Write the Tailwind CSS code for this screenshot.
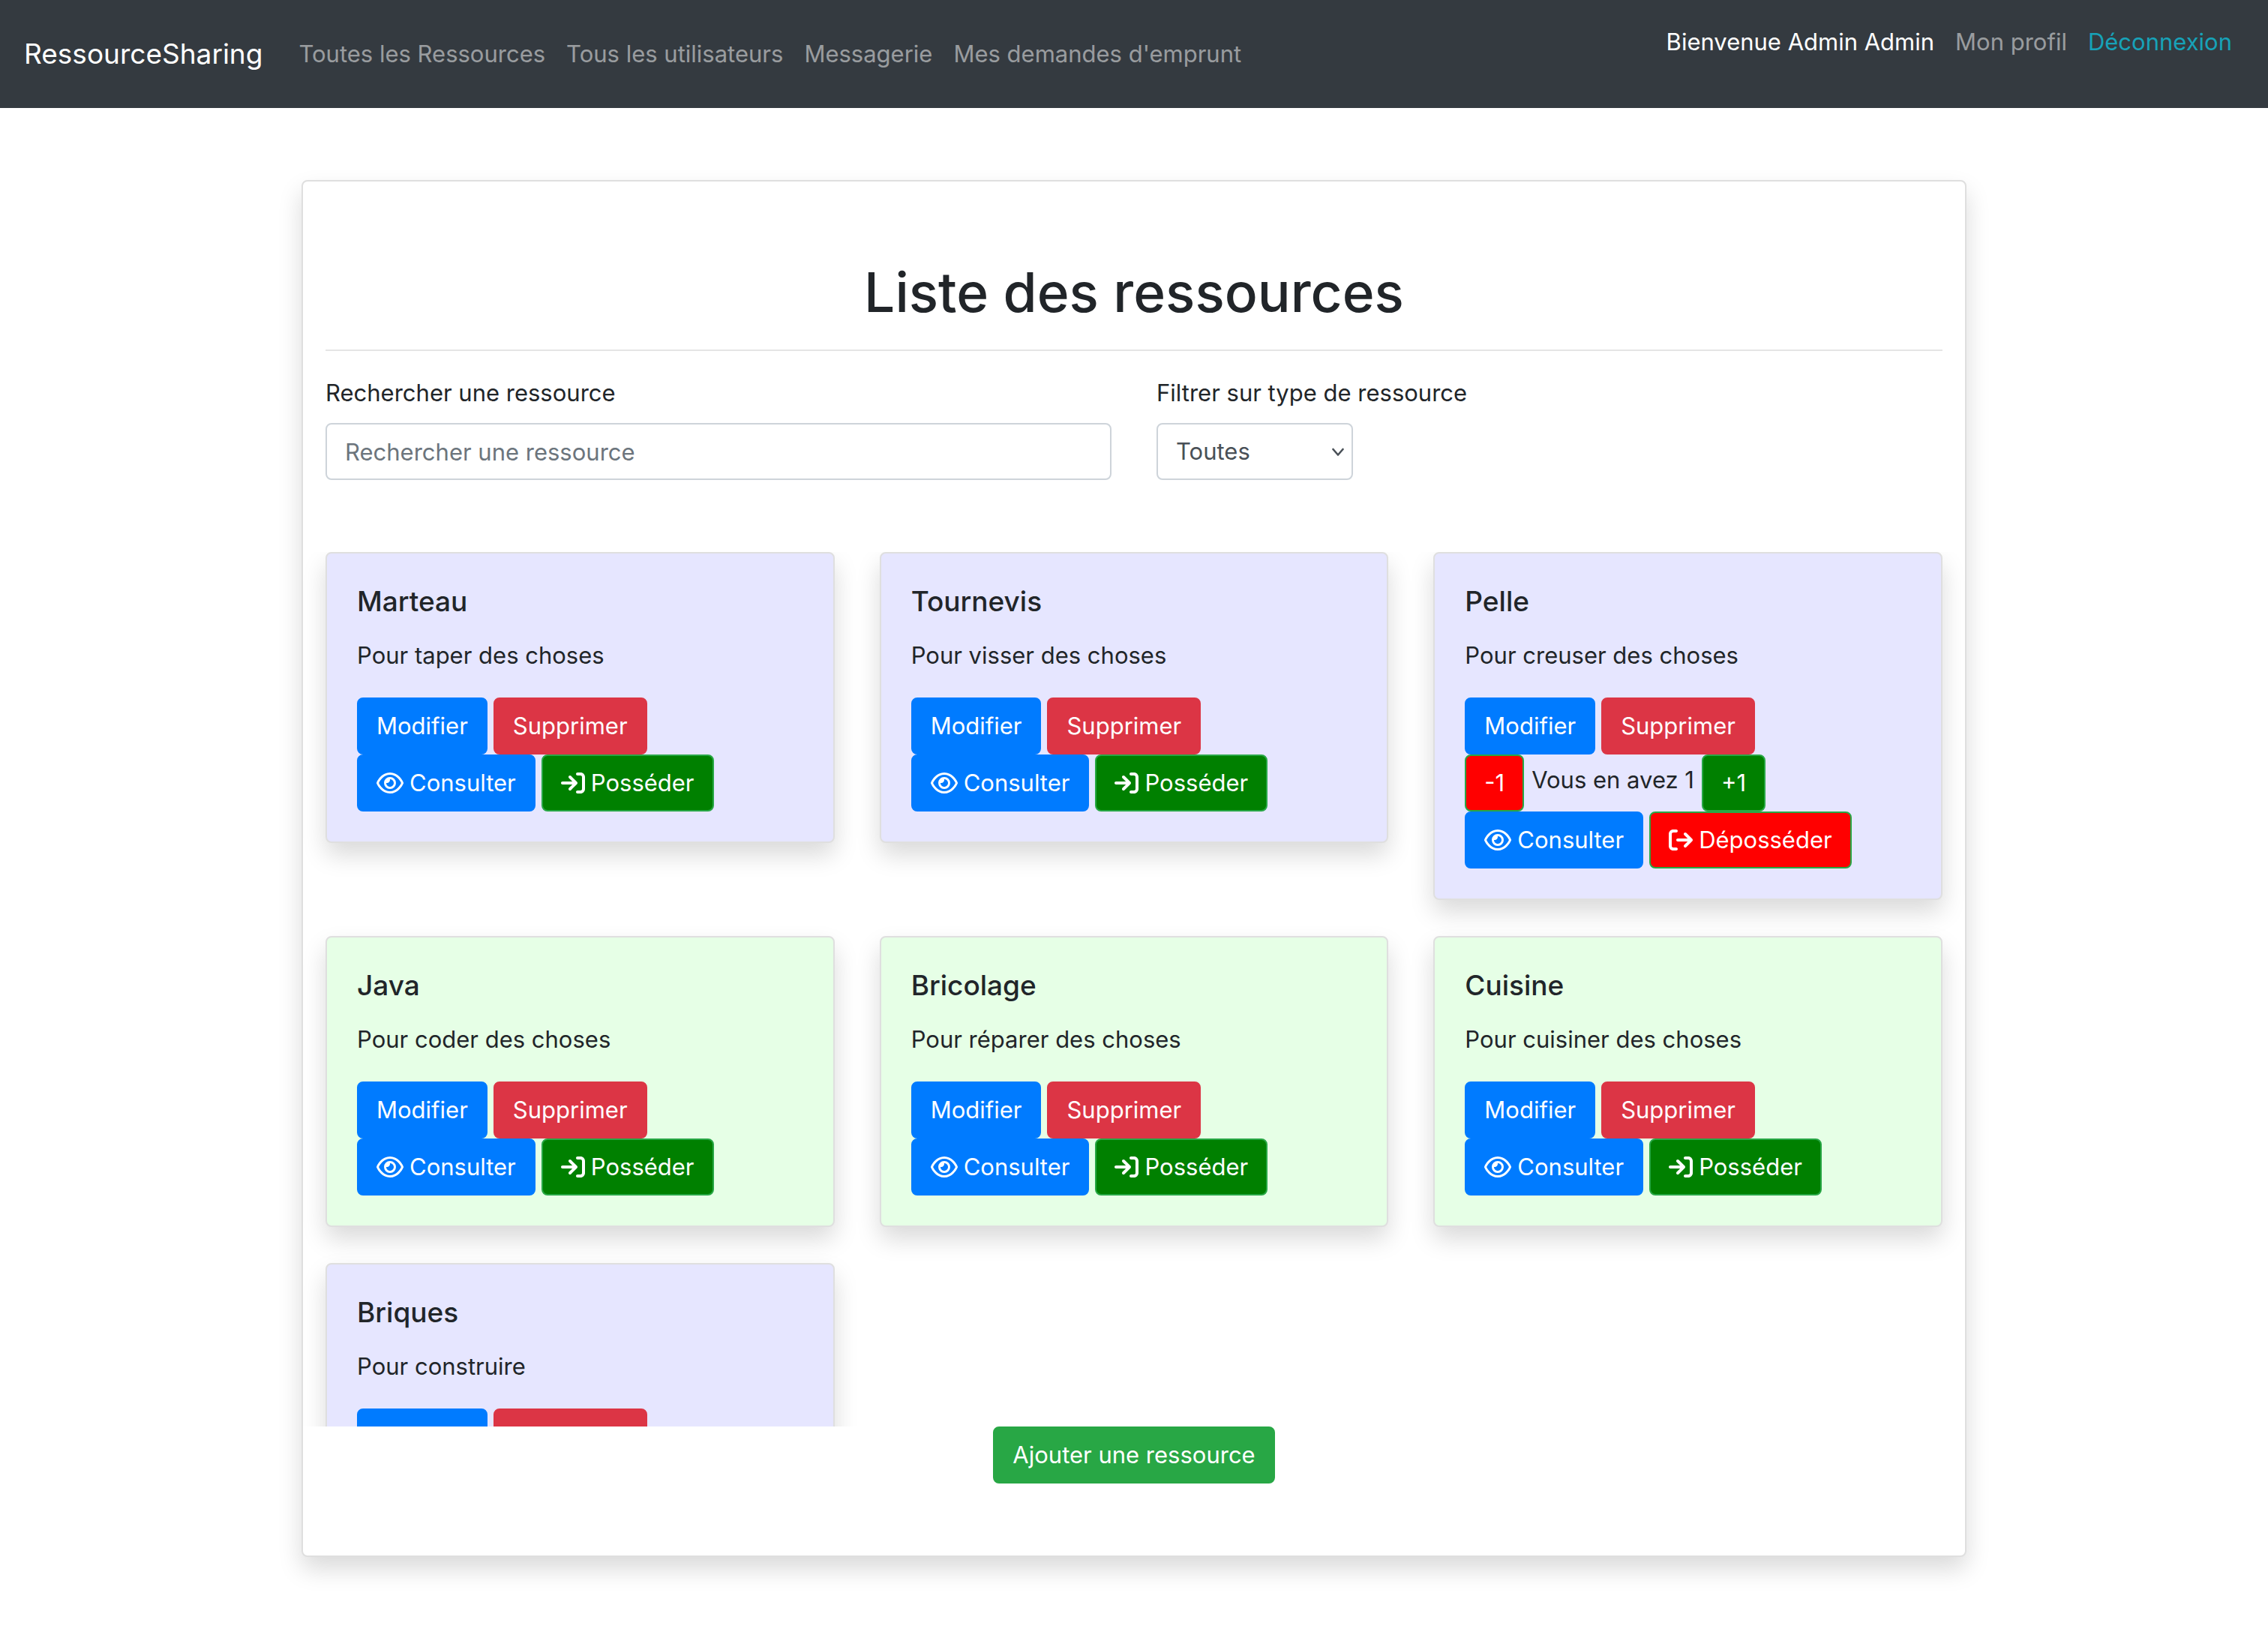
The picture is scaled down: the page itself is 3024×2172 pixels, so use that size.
<!DOCTYPE html>
<html lang="fr">
<head>
<meta charset="utf-8">
<meta name="viewport" content="width=device-width, initial-scale=1">
<title>RessourceSharing</title>
<script src="https://cdn.jsdelivr.net/npm/@tailwindcss/browser@4"></script>
</head>
<body class="min-h-screen bg-white font-['Inter',sans-serif] text-[31px] leading-[48px] text-[#212529]">

<svg class="hidden" aria-hidden="true">
  <symbol id="eye" viewBox="0 0 576 512"><path d="M288 80c-65.2 0-118.8 29.6-159.9 67.7C89.6 183.5 63 226 49.4 256c13.6 30 40.2 72.5 78.6 108.3C169.2 402.4 222.8 432 288 432s118.8-29.6 159.9-67.7C486.4 328.5 513 286 526.6 256c-13.6-30-40.2-72.5-78.6-108.3C406.8 109.6 353.2 80 288 80zM95.4 112.6C142.5 68.8 207.2 32 288 32s145.5 36.8 192.6 80.6c46.8 43.5 78.1 95.4 93 131.1c3.3 7.9 3.3 16.7 0 24.6c-14.9 35.7-46.2 87.7-93 131.1C433.5 443.2 368.8 480 288 480s-145.5-36.8-192.6-80.6C48.6 356 17.3 304 2.5 268.3c-3.3-7.9-3.3-16.7 0-24.6C17.3 208 48.6 156 95.4 112.6zM288 336c44.2 0 80-35.8 80-80s-35.8-80-80-80c-.7 0-1.3 0-2 0c1.3 5.1 2 10.5 2 16c0 35.3-28.7 64-64 64c-5.5 0-10.9-.7-16-2c0 .7 0 1.3 0 2c0 44.2 35.8 80 80 80zm0-208a128 128 0 1 1 0 256 128 128 0 1 1 0-256z"/></symbol>
  <symbol id="enter" viewBox="0 0 512 512"><path d="M352 96l64 0c17.7 0 32 14.3 32 32l0 256c0 17.7-14.3 32-32 32l-64 0c-17.7 0-32 14.3-32 32s14.3 32 32 32l64 0c53 0 96-43 96-96l0-256c0-53-43-96-96-96l-64 0c-17.7 0-32 14.3-32 32s14.3 32 32 32zm-9.4 182.6c12.5-12.5 12.5-32.8 0-45.3l-128-128c-12.5-12.5-32.8-12.5-45.3 0s-12.5 32.8 0 45.3L242.7 224 32 224c-17.7 0-32 14.3-32 32s14.3 32 32 32l210.7 0-73.4 73.4c-12.5 12.5-12.5 32.8 0 45.3s32.8 12.5 45.3 0l128-128z"/></symbol>
  <symbol id="leave" viewBox="0 0 512 512"><path d="M502.6 278.6c12.5-12.5 12.5-32.8 0-45.3l-128-128c-12.5-12.5-32.8-12.5-45.3 0s-12.5 32.8 0 45.3L402.7 224 192 224c-17.7 0-32 14.3-32 32s14.3 32 32 32l210.7 0-73.4 73.4c-12.5 12.5-12.5 32.8 0 45.3s32.8 12.5 45.3 0l128-128zM160 96c17.7 0 32-14.3 32-32s-14.3-32-32-32L96 32C43 32 0 75 0 128L0 384c0 53 43 96 96 96l64 0c17.7 0 32-14.3 32-32s-14.3-32-32-32l-64 0c-17.7 0-32-14.3-32-32l0-256c0-17.7 14.3-32 32-32l64 0z"/></symbol>
</svg>

<nav class="flex items-center bg-[#343a40] px-8 py-4 text-white/50">
  <a href="#" class="mr-12 text-[37px] text-white">RessourceSharing</a>
  <ul class="flex gap-7">
    <li><a href="#">Toutes les Ressources</a></li>
    <li><a href="#">Tous les utilisateurs</a></li>
    <li><a href="#">Messagerie</a></li>
    <li><a href="#">Mes demandes d'emprunt</a></li>
  </ul>
  <ul class="mb-8 ml-auto flex gap-7 px-4 py-4">
    <li class="text-white">Bienvenue Admin Admin</li>
    <li><a href="#">Mon profil</a></li>
    <li><a href="#" class="text-[#17a2b8]">Déconnexion</a></li>
  </ul>
</nav>

<main class="mx-auto my-24 max-w-[2220px] rounded-lg border-2 border-[#dfdfdf] bg-white px-[30px] pt-[100px] pb-24 shadow-[0_16px_32px_rgba(0,0,0,0.15)]">
  <h1 class="text-center text-[73px] leading-[96px] font-medium">Liste des ressources</h1>
  <hr class="mt-7 border-t-2 border-black/10">

  <form class="mt-8 grid grid-cols-2 gap-[60px]">
    <div class="flex flex-col gap-4">
      <label for="recherche">Rechercher une ressource</label>
      <input id="recherche" type="text" placeholder="Rechercher une ressource" class="h-[76px] w-full rounded-lg border-2 border-[#ced4da] bg-white px-6 text-[#495057] placeholder:text-[#6c757d]">
    </div>
    <div class="flex flex-col gap-4">
      <label for="type">Filtrer sur type de ressource</label>
      <div class="relative w-[262px]">
        <select id="type" class="h-[76px] w-full appearance-none rounded-lg border-2 border-[#ced4da] bg-white px-6 text-[#495057]">
          <option>Toutes</option>
        </select>
        <svg class="pointer-events-none absolute top-[33px] right-3 h-3 w-4 fill-none stroke-[#495057]" viewBox="0 0 16 12" stroke-width="2.6" stroke-linecap="round" stroke-linejoin="round"><path d="M1.500 2 8 9.500 14.500 2"/></svg>
      </div>
    </div>
  </form>

  <section class="-mx-[30px] mt-24 grid max-h-[1166px] grid-cols-3 items-start gap-x-[60px] gap-y-12 overflow-y-auto px-[30px] [scrollbar-width:none]">

    <article class="rounded-lg border-2 border-[#dfdfdf] bg-[#e6e6ff] p-10 shadow-[0_16px_32px_rgba(0,0,0,0.15)]">
      <h2 class="mb-6 text-[37px] font-medium">Marteau</h2>
      <p class="mb-8">Pour taper des choses</p>
      <div class="flex gap-2">
        <button class="h-[76px] rounded-lg border-2 border-[#007bff] bg-[#007bff] px-6 text-white">Modifier</button>
        <button class="h-[76px] rounded-lg border-2 border-[#dc3545] bg-[#dc3545] px-6 text-white">Supprimer</button>
      </div>
      <div class="flex gap-2">
        <button class="flex h-[76px] items-center gap-2 rounded-lg border-2 border-[#007bff] bg-[#007bff] px-6 text-white"><svg class="h-8 w-9 fill-current"><use href="#eye"/></svg>Consulter</button>
        <button class="flex h-[76px] items-center gap-2 rounded-lg border-2 border-[#28a745] bg-[#008000] px-6 text-white"><svg class="size-8 fill-current"><use href="#enter"/></svg>Posséder</button>
      </div>
    </article>

    <article class="rounded-lg border-2 border-[#dfdfdf] bg-[#e6e6ff] p-10 shadow-[0_16px_32px_rgba(0,0,0,0.15)]">
      <h2 class="mb-6 text-[37px] font-medium">Tournevis</h2>
      <p class="mb-8">Pour visser des choses</p>
      <div class="flex gap-2">
        <button class="h-[76px] rounded-lg border-2 border-[#007bff] bg-[#007bff] px-6 text-white">Modifier</button>
        <button class="h-[76px] rounded-lg border-2 border-[#dc3545] bg-[#dc3545] px-6 text-white">Supprimer</button>
      </div>
      <div class="flex gap-2">
        <button class="flex h-[76px] items-center gap-2 rounded-lg border-2 border-[#007bff] bg-[#007bff] px-6 text-white"><svg class="h-8 w-9 fill-current"><use href="#eye"/></svg>Consulter</button>
        <button class="flex h-[76px] items-center gap-2 rounded-lg border-2 border-[#28a745] bg-[#008000] px-6 text-white"><svg class="size-8 fill-current"><use href="#enter"/></svg>Posséder</button>
      </div>
    </article>

    <article class="rounded-lg border-2 border-[#dfdfdf] bg-[#e6e6ff] p-10 shadow-[0_16px_32px_rgba(0,0,0,0.15)]">
      <h2 class="mb-6 text-[37px] font-medium">Pelle</h2>
      <p class="mb-8">Pour creuser des choses</p>
      <div class="flex gap-2">
        <button class="h-[76px] rounded-lg border-2 border-[#007bff] bg-[#007bff] px-6 text-white">Modifier</button>
        <button class="h-[76px] rounded-lg border-2 border-[#dc3545] bg-[#dc3545] px-6 text-white">Supprimer</button>
      </div>
      <div class="flex items-center gap-2.5">
        <button class="h-[76px] rounded-lg border-2 border-[#28a745] bg-[#ff0000] px-6 text-white">-1</button>
        <span class="pb-2">Vous en avez 1</span>
        <button class="h-[76px] rounded-lg border-2 border-[#28a745] bg-[#008000] px-6 text-white">+1</button>
      </div>
      <div class="flex gap-2">
        <button class="flex h-[76px] items-center gap-2 rounded-lg border-2 border-[#007bff] bg-[#007bff] px-6 text-white"><svg class="h-8 w-9 fill-current"><use href="#eye"/></svg>Consulter</button>
        <button class="flex h-[76px] items-center gap-2 rounded-lg border-2 border-[#28a745] bg-[#ff0000] px-6 text-white"><svg class="size-8 fill-current"><use href="#leave"/></svg>Déposséder</button>
      </div>
    </article>

    <article class="rounded-lg border-2 border-[#dfdfdf] bg-[#e6ffe6] p-10 shadow-[0_16px_32px_rgba(0,0,0,0.15)]">
      <h2 class="mb-6 text-[37px] font-medium">Java</h2>
      <p class="mb-8">Pour coder des choses</p>
      <div class="flex gap-2">
        <button class="h-[76px] rounded-lg border-2 border-[#007bff] bg-[#007bff] px-6 text-white">Modifier</button>
        <button class="h-[76px] rounded-lg border-2 border-[#dc3545] bg-[#dc3545] px-6 text-white">Supprimer</button>
      </div>
      <div class="flex gap-2">
        <button class="flex h-[76px] items-center gap-2 rounded-lg border-2 border-[#007bff] bg-[#007bff] px-6 text-white"><svg class="h-8 w-9 fill-current"><use href="#eye"/></svg>Consulter</button>
        <button class="flex h-[76px] items-center gap-2 rounded-lg border-2 border-[#28a745] bg-[#008000] px-6 text-white"><svg class="size-8 fill-current"><use href="#enter"/></svg>Posséder</button>
      </div>
    </article>

    <article class="rounded-lg border-2 border-[#dfdfdf] bg-[#e6ffe6] p-10 shadow-[0_16px_32px_rgba(0,0,0,0.15)]">
      <h2 class="mb-6 text-[37px] font-medium">Bricolage</h2>
      <p class="mb-8">Pour réparer des choses</p>
      <div class="flex gap-2">
        <button class="h-[76px] rounded-lg border-2 border-[#007bff] bg-[#007bff] px-6 text-white">Modifier</button>
        <button class="h-[76px] rounded-lg border-2 border-[#dc3545] bg-[#dc3545] px-6 text-white">Supprimer</button>
      </div>
      <div class="flex gap-2">
        <button class="flex h-[76px] items-center gap-2 rounded-lg border-2 border-[#007bff] bg-[#007bff] px-6 text-white"><svg class="h-8 w-9 fill-current"><use href="#eye"/></svg>Consulter</button>
        <button class="flex h-[76px] items-center gap-2 rounded-lg border-2 border-[#28a745] bg-[#008000] px-6 text-white"><svg class="size-8 fill-current"><use href="#enter"/></svg>Posséder</button>
      </div>
    </article>

    <article class="rounded-lg border-2 border-[#dfdfdf] bg-[#e6ffe6] p-10 shadow-[0_16px_32px_rgba(0,0,0,0.15)]">
      <h2 class="mb-6 text-[37px] font-medium">Cuisine</h2>
      <p class="mb-8">Pour cuisiner des choses</p>
      <div class="flex gap-2">
        <button class="h-[76px] rounded-lg border-2 border-[#007bff] bg-[#007bff] px-6 text-white">Modifier</button>
        <button class="h-[76px] rounded-lg border-2 border-[#dc3545] bg-[#dc3545] px-6 text-white">Supprimer</button>
      </div>
      <div class="flex gap-2">
        <button class="flex h-[76px] items-center gap-2 rounded-lg border-2 border-[#007bff] bg-[#007bff] px-6 text-white"><svg class="h-8 w-9 fill-current"><use href="#eye"/></svg>Consulter</button>
        <button class="flex h-[76px] items-center gap-2 rounded-lg border-2 border-[#28a745] bg-[#008000] px-6 text-white"><svg class="size-8 fill-current"><use href="#enter"/></svg>Posséder</button>
      </div>
    </article>

    <article class="rounded-lg border-2 border-[#dfdfdf] bg-[#e6e6ff] p-10 shadow-[0_16px_32px_rgba(0,0,0,0.15)]">
      <h2 class="mb-6 text-[37px] font-medium">Briques</h2>
      <p class="mb-8">Pour construire</p>
      <div class="flex gap-2">
        <button class="h-[76px] rounded-lg border-2 border-[#007bff] bg-[#007bff] px-6 text-white">Modifier</button>
        <button class="h-[76px] rounded-lg border-2 border-[#dc3545] bg-[#dc3545] px-6 text-white">Supprimer</button>
      </div>
      <div class="flex gap-2">
        <button class="flex h-[76px] items-center gap-2 rounded-lg border-2 border-[#007bff] bg-[#007bff] px-6 text-white"><svg class="h-8 w-9 fill-current"><use href="#eye"/></svg>Consulter</button>
        <button class="flex h-[76px] items-center gap-2 rounded-lg border-2 border-[#28a745] bg-[#008000] px-6 text-white"><svg class="size-8 fill-current"><use href="#enter"/></svg>Posséder</button>
      </div>
    </article>
  </section>

  <div class="flex justify-center">
    <button class="h-[76px] rounded-lg border-2 border-[#28a745] bg-[#28a745] px-6 text-white">Ajouter une ressource</button>
  </div>
</main>

</body>
</html>
